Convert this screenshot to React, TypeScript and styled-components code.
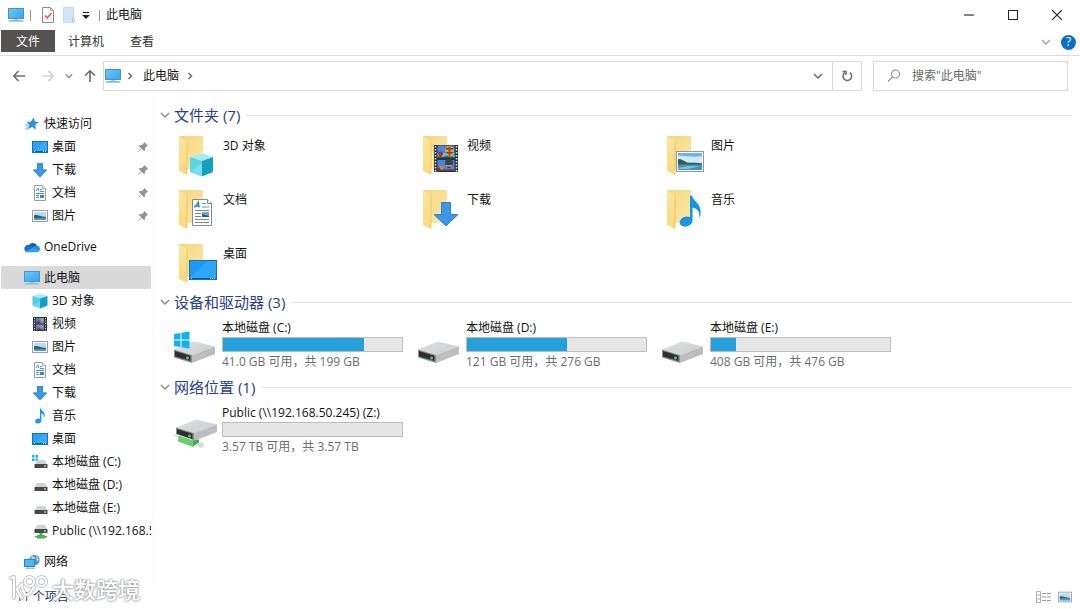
import React from "react";
import styled, { createGlobalStyle } from "styled-components";

const GlobalStyle = createGlobalStyle`
  * { box-sizing: border-box; }
  html, body, #root { height: 100%; }
  body {
    margin: 0;
    background: #fff;
    color: #111;
    font: 12px/16px "Open Sans", "Noto Sans CJK SC", sans-serif;
  }
  button, input { font: inherit; color: inherit; }
  ul { list-style: none; margin: 0; padding: 0; }
  a { color: inherit; text-decoration: none; }
  svg { display: block; flex: none; }
`;

/* ---------- icons ---------- */

type IconProps = { size?: number };

const PcIcon = () => (
  <svg width="16" height="16" viewBox="0 0 16 16">
    <defs>
      <linearGradient id="pc" x1="0" y1="0" x2="1" y2="1">
        <stop offset="0" stopColor="#6fc9fb" />
        <stop offset="0.5" stopColor="#4bb8fa" />
        <stop offset="1" stopColor="#36a5f0" />
      </linearGradient>
    </defs>
    <rect x="0.5" y="1.5" width="15" height="10" fill="url(#pc)" stroke="#4a93bd" />
    <rect x="6" y="12" width="4" height="1" fill="#a9c3d2" />
    <path d="M1 13h14l1 2H0z" fill="#b4cddb" />
    <path d="M2 13.5h12" stroke="#7fa6bd" strokeWidth="0.6" />
  </svg>
);

const StarIcon = () => (
  <svg width="16" height="16" viewBox="0 0 16 16">
    <path d="M9.800 1.500l1 4 4.200.5-3.600 2.500.4 5.300-3.600-3L3.800 13.500l1.600-4.600L2.500 6l4.200-.3z" fill="#2b93df" />
    <path d="M1 9h4M2 11h3M1 13h3" stroke="#6fb8ec" strokeWidth="1" />
  </svg>
);

const DesktopIcon = () => (
  <svg width="16" height="16" viewBox="0 0 16 16">
    <rect x="0.5" y="2.5" width="15" height="11" fill="#27a0f6" stroke="#1572b5" />
    <path d="M1 13L12 3h3v10z" fill="#43b1fb" opacity="0.6" />
    <path d="M1 12.5h14" stroke="#0f5f9d" />
    <path d="M2 12.5h1M11 12.5h3" stroke="#d9efff" strokeDasharray="1 1" />
  </svg>
);

const DownIcon = () => (
  <svg width="16" height="16" viewBox="0 0 16 16">
    <path d="M5 1h6v6.500h4.500L8 15.500.500 7.500H5z" fill="#3c96e4" />
    <path d="M5.500 1.500h5v6.500h3.800L8 14.800 1.700 8h3.800z" fill="none" stroke="#2f82cc" strokeWidth="0.7" />
  </svg>
);

const DocIcon = () => (
  <svg width="16" height="16" viewBox="0 0 16 16">
    <path d="M2.500.500h8l3 3v12h-11z" fill="#fff" stroke="#9a9fa3" />
    <path d="M10.500.500v3h3" fill="#e8e8e8" stroke="#9a9fa3" strokeWidth="0.8" />
    <path d="M4 6l2-3 1 3M8 4.500h2M8 6.500h4M4 8.500h8" stroke="#3e96d6" fill="none" />
    <path d="M4 10.500h3M4 12.500h3" stroke="#4a9ad5" />
    <rect x="8" y="10" width="4" height="3" fill="#3f86b8" />
  </svg>
);

const PicIcon = ({ size = 16 }: IconProps) => (
  <svg width={size} height={size} viewBox="0 0 16 16">
    <rect x="0.500" y="2.500" width="15" height="11" fill="#fff" stroke="#98a0a6" />
    <rect x="2" y="4" width="12" height="8" fill="#b5dcf5" />
    <path d="M2 7.500c3-1.500 5 1 12 1.500v1H2z" fill="#335f62" />
    <rect x="2" y="10" width="12" height="2" fill="#4b9bd2" />
  </svg>
);

const CloudIcon = () => (
  <svg width="16" height="16" viewBox="0 0 16 16">
    <path d="M4.800 6.200A4.700 4.700 0 0 1 13 6.600L8 10z" fill="#0c5cb1" />
    <path d="M.500 10.500a3.700 3.700 0 0 1 5.200-4.300L12 10l-8 3.200A3.200 3.200 0 0 1 .500 10.500z" fill="#1673cc" />
    <path d="M12.600 6.500A3.400 3.400 0 0 1 15.200 12L8.500 9.300c1-2 2.500-3 4.100-2.800z" fill="#2390df" />
    <path d="M1.500 12.200L8.500 8.800l7 2.700c-.4 1-1.300 1.700-2.700 1.700H4c-1 0-1.900-.4-2.500-1z" fill="#2a9fec" />
  </svg>
);

const CubeIcon = () => (
  <svg width="16" height="16" viewBox="0 0 16 16">
    <path d="M.500 3L8 .500 15.500 3 8 5.500z" fill="#a5e9f2" />
    <path d="M.500 3L8 5.500v10L.500 12.500z" fill="#4fd0e2" />
    <path d="M15.500 3L8 5.500v10l7.500-3z" fill="#12a0bf" />
    <path d="M.500 12.500L8 8v7.500z" fill="#8ae3ee" opacity="0.5" />
  </svg>
);

const FilmIcon = () => (
  <svg width="16" height="16" viewBox="0 0 16 16">
    <rect x="1" y="1" width="14" height="14" fill="#33353d" />
    <path d="M2.500 2v13M13.500 2v13" stroke="#e4e4e4" strokeDasharray="1 1.500" />
    <path d="M4 2h8v5.500H4zM4 8.500h8V14H4z" fill="#4f82dc" />
    <path d="M8 2.500h3.500v2L10 6.500z" fill="#e2a52c" />
    <path d="M4 6.500l3-2 1.500 3H4z" fill="#7c3140" />
    <path d="M7 9.500h4v2L9 13z" fill="#d38c2a" />
    <path d="M4 14l3-2 4 2z" fill="#7c3140" />
  </svg>
);

const MusicIcon = () => (
  <svg width="16" height="16" viewBox="0 0 16 16">
    <path d="M8 .500h1.200c.3 2.500 4.600 3.600 3.400 8.500h-.8c.2-2.200-.8-3.300-2.400-3.800V12.500c0 1.800-1.600 3-3.600 3S3 14.300 3.200 13c.2-1.600 2.600-2.900 4.800-2.200z" fill="#1b98e4" />
  </svg>
);

const SmallDrive = ({ kind }: { kind?: "system" | "network" }) => (
  <svg width="16" height="16" viewBox="0 0 16 16">
    {kind === "system" && (
      <path d="M0 1h2.500v2.500H0zM3.500 1H6v2.500H3.500zM0 4.500h2.500V7H0zM3.500 4.500H6V7H3.500z" fill="#12b1ec" />
    )}
    <g transform={kind === "network" ? "translate(1 -3)" : "translate(1 1)"}>
      <path d="M4 5h8l2 4H2z" fill="#d1d2d4" />
      <rect x="1.500" y="9" width="13" height="4" rx="0.500" fill="#46494c" />
      <rect x="11" y="10" width="2" height="2" fill="#5fd053" />
    </g>
    {kind === "network" && (
      <path d="M7.500 10h3v2h2.500v1h2v1.500h-2v1h-8v-1H3V13h2v-1h2.500z" fill="#4bb14d" />
    )}
  </svg>
);

const NetworkIcon = () => (
  <svg width="16" height="16" viewBox="0 0 16 16">
    <circle cx="10.500" cy="6" r="5.200" fill="#4f9bcb" />
    <path d="M7 3c2-2 3 0 4 1s-1 2-3 2zM12 2c2 1 2 3 3 4l-2 1z" fill="#b4dced" />
    <rect x="0.500" y="5.500" width="10" height="7" fill="#4db6f5" stroke="#347fb4" />
    <path d="M2 13.500h8l1 1.500H1z" fill="#9dbccd" />
  </svg>
);

const PinIcon = () => (
  <svg width="12" height="12" viewBox="0 0 12 12">
    <path d="M7.300 1l3.700 3.700-1 .5-2 2 .1 2.300-1.100.8-2.400-2.500L1.500 11 1 10.500l3.200-3.200L1.800 5l.9-1.100 2.200.1 2-2z" fill="#8c959c" />
  </svg>
);

const Chevron = ({ dir, color = "#6b6b6b", size = 10 }: { dir: "down" | "right"; color?: string; size?: number }) => (
  <svg width={size} height={size} viewBox="0 0 10 10" fill="none" stroke={color} strokeWidth="1.500">
    <path d={dir === "down" ? "M1 3l4 4 4-4" : "M3.500 2l3 3-3 3"} />
  </svg>
);

const Arrow = ({ turn, color }: { turn: number; color: string }) => (
  <svg width="14" height="14" viewBox="0 0 14 14" fill="none" stroke={color} strokeWidth="1.700">
    <path d="M13 7H2M6.500 2L1.800 7l4.700 5" transform={`rotate(${turn} 7 7)`} />
  </svg>
);

const PropertiesIcon = () => (
  <svg width="14" height="16" viewBox="0 0 14 16">
    <path d="M1.500.500h8l3 3v12h-11z" fill="#fafafa" stroke="#8c8c8c" />
    <path d="M9.500.500v3h3" fill="none" stroke="#a5a5a5" />
    <path d="M4 8.500l2.300 2.500L10.500 6" fill="none" stroke="#e56a3c" strokeWidth="1.700" />
  </svg>
);

const NewFolderIcon = () => (
  <svg width="14" height="16" viewBox="0 0 14 16">
    <path d="M1.500.500h10v10l1 1v4h-11z" fill="#d5e3f6" stroke="#c6d6ee" />
    <path d="M10.500 10.500v5" stroke="#b1c3de" />
  </svg>
);

type Badge = "cube" | "doc" | "desktop" | "video" | "down" | "picture" | "music";

const FolderBadge = ({ badge }: { badge: Badge }) => {
  switch (badge) {
    case "cube":
      return (
        <g>
          <path d="M12 21l12-3.500L35 21l-11 4z" fill="#a4ebf3" />
          <path d="M12 21l12 4v15.500L12 36z" fill="#5ed3e4" />
          <path d="M35 21l-11 4v15.500L35 36z" fill="#0fa3c0" />
          <path d="M12 36l12-9v13.500z" fill="#8fe5ef" opacity="0.6" />
        </g>
      );
    case "doc":
      return (
        <g>
          <path d="M14.500 9.500h15l4 4v22h-19z" fill="#fff" stroke="#85898c" />
          <path d="M29.500 9.500v4h4" fill="#ededed" stroke="#85898c" />
          <path d="M16.500 17.500l4-5.500.5 5.500M18 16h3" fill="none" stroke="#2e7fc0" strokeWidth="1.300" />
          <path d="M24 13.500h4M24 17h7" stroke="#4c9ad3" />
          <path d="M17 20.500h14M17 23.500h6M17 26.500h6M17 29.500h14M17 32.500h14" stroke="#7b8790" />
          <rect x="24" y="22" width="7" height="5" fill="#6fa7cc" />
          <path d="M24 27v-3l7 2v1z" fill="#315a70" />
        </g>
      );
    case "desktop":
      return (
        <g>
          <rect x="11.500" y="16.500" width="27" height="19" fill="#1e9cf4" stroke="#1670ae" />
          <path d="M12 34L30 17h8v17z" fill="#3aadfb" opacity="0.6" />
          <path d="M12 34.500h26" stroke="#0d5c97" />
          <path d="M13 34.500h2M32 34.500h6" stroke="#cdeaff" strokeDasharray="1 1" />
        </g>
      );
    case "video":
      return (
        <g>
          <rect x="12" y="9" width="24" height="27" fill="#2f3138" />
          <path d="M13.500 10v26M34.500 10v26" stroke="#e4e4e4" strokeWidth="1.500" strokeDasharray="1.500 1.500" />
          <path d="M15.500 9.500h17v12.500h-17zM15.500 24h17v11h-17z" fill="#4a84e0" />
          <path d="M15.500 17h17v5h-17z" fill="#79afe8" />
          <path d="M23 14.500a4.500 4.500 0 0 1 9 0c0 2-2 3.500-3.500 6h-2c-1-2.500-3.500-4-3.500-6z" fill="#e3a62b" />
          <path d="M24 12h7v1.500h-7zM24 16h7l-1 1.500h-5z" fill="#31573c" />
          <path d="M26.500 10.500h2v9h-2z" fill="#c23c2c" />
          <path d="M16 18a2.500 2.500 0 0 1 5 0l-2 3h-1z" fill="#a5323c" />
          <path d="M15.500 22v-2l5 1 4-1 8 1v1z" fill="#335d34" />
          <path d="M23 27a4 4 0 0 1 8 0c0 2-2 3-3 5h-2c-1-2-3-3-3-5z" fill="#35415c" />
          <path d="M24 29h6v1.500h-6z" fill="#d2a12e" />
          <path d="M15.500 35v-3l5-1 3 3 4-1 5 1v1z" fill="#7c3140" />
          <circle cx="20" cy="32" r="2" fill="#d38c2a" />
        </g>
      );
    case "down":
      return <path d="M19.500 12.500h9v12h7.500L24 36 12 24.500h7.500z" fill="#3a98e9" stroke="#2e82cc" />;
    case "picture":
      return (
        <g>
          <rect x="10.500" y="15.500" width="27" height="20" fill="#fff" stroke="#92999e" />
          <rect x="12" y="17" width="24" height="17" fill="#6fb0ee" />
          <path d="M12 20c6-1 12 2 24 0v7H12z" fill="#cfe9f8" />
          <path d="M12 23c4 0 6 2 9 3.500 5 .5 11 0 15 1V29H12z" fill="#31604f" />
          <path d="M12 28.500h24V34H12z" fill="#3f93c4" />
          <path d="M12 32l10-2 12 0-12 3H12z" fill="#7dbfda" />
        </g>
      );
    case "music":
      return (
        <path d="M24 5.500h2c1 6 10.500 8 8.500 19.500-.3 1.400-1 2.400-1.300 2.300 1-5-1.700-9-6.700-9.800V30c0 4-3.500 6.500-7.500 6.500S13 34 14 31c1.200-4 6-5.500 10-4z" fill="#1795e2" />
      );
  }
};

const FolderIcon = ({ badge }: { badge: Badge }) => (
  <svg width="40" height="44" viewBox="0 0 40 44">
    <defs>
      <linearGradient id="folder-back" x1="0" y1="0" x2="1" y2="1">
        <stop offset="0" stopColor="#f5d67e" />
        <stop offset="1" stopColor="#fde9a9" />
      </linearGradient>
      <linearGradient id="folder-front" x1="0" y1="0" x2="0" y2="1">
        <stop offset="0" stopColor="#fde6a0" />
        <stop offset="1" stopColor="#fbd979" />
      </linearGradient>
    </defs>
    <path d="M1 0h24v33H8z" fill="url(#folder-back)" />
    <path d="M1 0l8 6v33l-8-4z" fill="url(#folder-front)" />
    <path d="M9 6v32" stroke="#e2bd62" strokeWidth="0.700" />
    <FolderBadge badge={badge} />
  </svg>
);

const DriveIcon = ({ kind }: { kind: "plain" | "system" | "network" }) => (
  <svg width="46" height="40" viewBox="0 0 46 40">
    <defs>
      <linearGradient id="drive-top" x1="0" y1="0" x2="1" y2="1">
        <stop offset="0" stopColor="#dedfe0" />
        <stop offset="1" stopColor="#cdced0" />
      </linearGradient>
    </defs>
    <g transform={kind === "network" ? "translate(2 -7)" : undefined}>
      <path d="M2 21.500L22 13.500 43 18.500 20 27z" fill="url(#drive-top)" />
      <path d="M20 27l23-8.500v7.500L20 35z" fill="#bcbdc0" />
      <path d="M2 21.500L20 27v8L2 29.500z" fill="#8c8e91" />
      <path d="M3 23l15.500 4.700v5.400L3 28.500z" fill="#2c3033" />
      <circle cx="15.500" cy="30" r="1.500" fill="#41d344" />
    </g>
    {kind === "system" && (
      <path d="M2 6l6.500-1v6.500H2zM9.500 4.800L17.500 3.500v8h-8zM2 12.500h6.500V19L2 18zM9.500 12.500h8v8l-8-1.300z" fill="#0fb2ee" />
    )}
    {kind === "network" && (
      <g>
        <path d="M1 22.500l4-1.500 26 9.500-3 4z" fill="#dfe3e3" />
        <circle cx="29" cy="32" r="2.800" fill="#d8dbdb" />
        <path d="M7 23l13 4.500 7-1v3l-6 4L6 28z" fill="#3fb34b" />
        <path d="M7 23l14 5v6L6 28.500z" fill="#66d36d" />
      </g>
    )}
  </svg>
);

const RefreshIcon = () => (
  <svg width="14" height="14" viewBox="0 0 14 14" fill="none" stroke="#6a6a6a" strokeWidth="1.500">
    <path d="M9.800 3.600a4.300 4.300 0 1 1-5 0M2.500 2.500h3.500v3.500" />
  </svg>
);

const SearchIcon = () => (
  <svg width="14" height="14" viewBox="0 0 14 14" fill="none" stroke="#8b8b96" strokeWidth="1.100">
    <circle cx="8.500" cy="5" r="4" />
    <path d="M5.500 8L1 12.500" />
  </svg>
);

const LogoMark = () => (
  <svg width="42" height="28" viewBox="0 0 42 28" fill="none" strokeLinecap="round" strokeLinejoin="round">
    {["#c3c5c9", "#fff"].map((stroke, i) => (
      <g key={stroke} stroke={stroke} strokeWidth={i ? 2 : 4}>
        <path d="M3 3l3-1v21" />
        <path d="M14 9l-5 5c1 2 2 6 5 9" />
        <path d="M14 9c0 6 2 11 5 11 4 0 4-5 7-8" />
        <circle cx="21.500" cy="6.500" r="4.500" />
        <circle cx="33.500" cy="6.500" r="4.500" />
      </g>
    ))}
  </svg>
);

/* ---------- frame ---------- */

const Window = styled.div`
  position: relative;
  display: flex;
  flex-direction: column;
  min-height: 100%;
`;

const TitleBar = styled.header`
  display: flex;
  align-items: center;
  height: 30px;
  padding: 0 1px 0 8px;
`;

const QuickTools = styled.div`
  display: flex;
  align-items: center;
  gap: 6px;
  margin-right: auto;
`;

const ToolGroup = styled.div`
  display: flex;
  align-items: center;
`;

const Divider = styled.span`
  width: 1px;
  height: 11px;
  background: #999;
`;

const PlainButton = styled.button`
  display: flex;
  align-items: center;
  justify-content: center;
  padding: 0;
  border: 0;
  background: none;
`;

const ToolButton = styled(PlainButton)<{ $narrow?: boolean }>`
  width: ${(p) => (p.$narrow ? 14 : 21)}px;
  height: 22px;
`;

const WindowButton = styled(PlainButton)`
  width: 44px;
  height: 30px;
`;

const Title = styled.h1`
  margin: 0;
  font-size: 12px;
  font-weight: 400;
  line-height: 16px;
`;

const Ribbon = styled.div`
  display: flex;
  align-items: flex-start;
  height: 26px;
  padding-left: 1px;
  border-bottom: 1px solid #dcdcdc;
`;

const RibbonTab = styled.button<{ $file?: boolean }>`
  height: 22px;
  padding: 2px ${(p) => (p.$file ? 15 : 13)}px 0;
  border: 0;
  background: ${(p) => (p.$file ? "#545150" : "none")};
  color: ${(p) => (p.$file ? "#fff" : "#333")};
`;

const RibbonEnd = styled.div`
  display: flex;
  align-items: center;
  gap: 10px;
  height: 24px;
  margin-left: auto;
  padding-right: 4px;
`;

const Help = styled(PlainButton)`
  width: 15px;
  height: 15px;
  border-radius: 50%;
  background: #0a6fc8;
  color: #fff;
`;

const AddressRow = styled.div`
  display: flex;
  align-items: center;
  height: 40px;
  padding: 0 12px;
`;

const NavButtons = styled.div`
  display: flex;
  align-items: center;
  width: 91px;
  gap: 15px;
`;

const NavCluster = styled.div`
  display: flex;
  align-items: center;
  gap: 10px;
`;

const AddressBox = styled.div`
  display: flex;
  align-items: center;
  flex: 1;
  height: 30px;
  border: 1px solid #d9d9d9;
`;

const Crumbs = styled.nav`
  display: flex;
  align-items: center;
  gap: 4px;
  margin-right: auto;
  padding-left: 1px;

  a { padding: 0 2px 0 4px; }
`;

const BoxButton = styled(PlainButton)<{ $ruled?: boolean }>`
  width: 29px;
  height: 28px;
  border-left: ${(p) => (p.$ruled ? "1px solid #d9d9d9" : "0")};
`;

const SearchBox = styled.label`
  display: flex;
  align-items: center;
  width: 195px;
  height: 30px;
  margin-left: 11px;
  padding-left: 13px;
  gap: 11px;
  border: 1px solid #d9d9d9;

  input {
    flex: 1;
    min-width: 0;
    padding: 0;
    border: 0;
    outline: 0;
    background: none;
  }
  input::placeholder { color: #6a6a6a; opacity: 1; }
`;

/* ---------- sidebar ---------- */

const Body = styled.div`
  display: flex;
  flex: 1;
`;

const Sidebar = styled.nav`
  display: flex;
  flex-direction: column;
  gap: 8px;
  width: 154px;
  padding: 16px 2px 8px 1px;
  border-right: 1px solid #f5f5f5;
`;

const TreeLink = styled.a<{ $child?: boolean; $selected?: boolean }>`
  display: flex;
  align-items: center;
  gap: 4px;
  height: 23px;
  padding-left: ${(p) => (p.$child ? 31 : 23)}px;
  background: ${(p) => (p.$selected ? "#d9d9d9" : "none")};
  overflow: hidden;
  white-space: nowrap;
`;

const PinSlot = styled.span`
  margin-left: auto;
  padding-right: 2px;
`;

/* ---------- main area ---------- */

const Main = styled.main`
  flex: 1;
  min-width: 0;
  padding: 8px 8px 8px 6px;
`;

const GroupSection = styled.section<{ $spaced?: boolean }>`
  padding-bottom: ${(p) => (p.$spaced ? 3 : 0)}px;
`;

const GroupHead = styled.h2`
  display: flex;
  align-items: center;
  gap: 4px;
  height: 22px;
  margin: 0;
  color: #27408b;
  font-size: 15px;
  font-weight: 400;
  line-height: 20px;

  &::after {
    content: "";
    flex: 1;
    height: 1px;
    margin-left: 2px;
    background: #e2e2e2;
  }
`;

const Tiles = styled.ul`
  display: grid;
  grid-template-columns: repeat(auto-fill, 244px);
  padding-left: 12px;
`;

const FolderTile = styled.a`
  display: flex;
  height: 54px;
  gap: 5px;
  padding: 10px 0 0 6px;
`;

const TileName = styled.span`
  padding-top: 2px;
`;

const DriveTile = styled.a`
  display: flex;
  height: 63px;
  padding-top: 7px;
`;

const DriveArt = styled.span`
  width: 50px;
  padding-top: 8px;
`;

const DriveInfo = styled.span`
  display: flex;
  flex-direction: column;
  width: 181px;
  white-space: nowrap;
`;

const Meter = styled.span`
  height: 15px;
  margin: 1px 0 2px;
  border: 1px solid #bcbcbc;
  background: #e6e6e6;
`;

const MeterFill = styled.span`
  display: block;
  height: 100%;
  background: #26a0da;
`;

const Muted = styled.span`
  color: #6d6d6d;
`;

/* ---------- status bar ---------- */

const StatusBar = styled.footer`
  display: flex;
  align-items: center;
  justify-content: space-between;
  height: 24px;
  padding: 0 8px 0 16px;
  color: #1e395b;
`;

const ViewButtons = styled.div`
  display: flex;
  gap: 6px;
`;

const Watermark = styled.div`
  position: absolute;
  left: 8px;
  bottom: 6px;
  display: flex;
  align-items: center;
  gap: 2px;
  color: #fff;
  font-size: 22px;
  font-weight: 500;
  line-height: 28px;
  text-shadow: 0 0 2px #9b9ea4, 0 0 2px #9b9ea4, 0 0 3px #b5b8bd;
  pointer-events: none;
`;

/* ---------- data ---------- */

type Node = { label: string; icon: React.ReactNode; pinned?: boolean };
type Branch = { root: Node; selected?: boolean; children?: Node[] };

const tree: Branch[] = [
  {
    root: { label: "快速访问", icon: <StarIcon /> },
    children: [
      { label: "桌面", icon: <DesktopIcon />, pinned: true },
      { label: "下载", icon: <DownIcon />, pinned: true },
      { label: "文档", icon: <DocIcon />, pinned: true },
      { label: "图片", icon: <PicIcon />, pinned: true },
    ],
  },
  { root: { label: "OneDrive", icon: <CloudIcon /> } },
  {
    root: { label: "此电脑", icon: <PcIcon /> },
    selected: true,
    children: [
      { label: "3D 对象", icon: <CubeIcon /> },
      { label: "视频", icon: <FilmIcon /> },
      { label: "图片", icon: <PicIcon /> },
      { label: "文档", icon: <DocIcon /> },
      { label: "下载", icon: <DownIcon /> },
      { label: "音乐", icon: <MusicIcon /> },
      { label: "桌面", icon: <DesktopIcon /> },
      { label: "本地磁盘 (C:)", icon: <SmallDrive kind="system" /> },
      { label: "本地磁盘 (D:)", icon: <SmallDrive /> },
      { label: "本地磁盘 (E:)", icon: <SmallDrive /> },
      { label: "Public (\\\\192.168.50.245) (Z:)", icon: <SmallDrive kind="network" /> },
    ],
  },
  { root: { label: "网络", icon: <NetworkIcon /> } },
];

const folders: { label: string; badge: Badge }[] = [
  { label: "3D 对象", badge: "cube" },
  { label: "视频", badge: "video" },
  { label: "图片", badge: "picture" },
  { label: "文档", badge: "doc" },
  { label: "下载", badge: "down" },
  { label: "音乐", badge: "music" },
  { label: "桌面", badge: "desktop" },
];

type Drive = { label: string; space: string; used: number; kind: "plain" | "system" | "network" };

const drives: Drive[] = [
  { label: "本地磁盘 (C:)", space: "41.0 GB 可用，共 199 GB", used: 79, kind: "system" },
  { label: "本地磁盘 (D:)", space: "121 GB 可用，共 276 GB", used: 56, kind: "plain" },
  { label: "本地磁盘 (E:)", space: "408 GB 可用，共 476 GB", used: 14, kind: "plain" },
];

const shares: Drive[] = [
  { label: "Public (\\\\192.168.50.245) (Z:)", space: "3.57 TB 可用，共 3.57 TB", used: 0, kind: "network" },
];

/* ---------- composed parts ---------- */

const TreeItem = ({ node, child, selected }: { node: Node; child?: boolean; selected?: boolean }) => (
  <TreeLink href="#" $child={child} $selected={selected}>
    {node.icon}
    {node.label}
    {node.pinned && (
      <PinSlot>
        <PinIcon />
      </PinSlot>
    )}
  </TreeLink>
);

const Group = ({ title, spaced, children }: { title: string; spaced?: boolean; children: React.ReactNode }) => (
  <GroupSection $spaced={spaced}>
    <GroupHead>
      <Chevron dir="down" color="#8a8a8a" />
      {title}
    </GroupHead>
    <Tiles>{children}</Tiles>
  </GroupSection>
);

const DriveItem = ({ drive }: { drive: Drive }) => (
  <li>
    <DriveTile href="#">
      <DriveArt>
        <DriveIcon kind={drive.kind} />
      </DriveArt>
      <DriveInfo>
        {drive.label}
        <Meter role="meter" aria-label={drive.label} aria-valuemin={0} aria-valuemax={100} aria-valuenow={drive.used}>
          <MeterFill style={{ width: `${drive.used}%` }} />
        </Meter>
        <Muted>{drive.space}</Muted>
      </DriveInfo>
    </DriveTile>
  </li>
);

export default function App() {
  return (
    <Window>
      <GlobalStyle />
      <TitleBar>
        <QuickTools>
          <PcIcon />
          <Divider />
          <ToolGroup>
            <ToolButton aria-label="属性">
              <PropertiesIcon />
            </ToolButton>
            <ToolButton aria-label="新建文件夹">
              <NewFolderIcon />
            </ToolButton>
            <ToolButton $narrow aria-label="自定义快速访问工具栏">
              <svg width="8" height="8" viewBox="0 0 8 8" fill="#222">
                <path d="M1 1h6v1H1zM0 4h8L4 8z" />
              </svg>
            </ToolButton>
          </ToolGroup>
          <Divider />
          <Title>此电脑</Title>
        </QuickTools>
        <WindowButton aria-label="最小化">
          <svg width="10" height="10" viewBox="0 0 10 10">
            <path d="M0 5h10" stroke="#333" strokeWidth="1.200" />
          </svg>
        </WindowButton>
        <WindowButton aria-label="最大化">
          <svg width="10" height="10" viewBox="0 0 10 10">
            <rect x="0.500" y="0.500" width="9" height="9" fill="none" stroke="#222" />
          </svg>
        </WindowButton>
        <WindowButton aria-label="关闭">
          <svg width="10" height="10" viewBox="0 0 10 10">
            <path d="M0 0l10 10M10 0L0 10" stroke="#222" strokeWidth="1.200" />
          </svg>
        </WindowButton>
      </TitleBar>

      <Ribbon>
        <RibbonTab $file>文件</RibbonTab>
        <RibbonTab>计算机</RibbonTab>
        <RibbonTab>查看</RibbonTab>
        <RibbonEnd>
          <PlainButton aria-label="展开功能区">
            <Chevron dir="down" color="#a5a5a5" />
          </PlainButton>
          <Help>?</Help>
        </RibbonEnd>
      </Ribbon>

      <AddressRow>
        <NavButtons>
          <PlainButton aria-label="后退">
            <Arrow turn={0} color="#6e6e6e" />
          </PlainButton>
          <NavCluster>
            <PlainButton aria-label="前进">
              <Arrow turn={180} color="#d2d2d2" />
            </PlainButton>
            <PlainButton aria-label="最近位置">
              <Chevron dir="down" size={8} color="#777" />
            </PlainButton>
            <PlainButton aria-label="上移">
              <Arrow turn={90} color="#6e6e6e" />
            </PlainButton>
          </NavCluster>
        </NavButtons>
        <AddressBox>
          <Crumbs>
            <PcIcon />
            <Chevron dir="right" />
            <a href="#">此电脑</a>
            <Chevron dir="right" />
          </Crumbs>
          <BoxButton aria-label="以前的位置">
            <Chevron dir="down" />
          </BoxButton>
          <BoxButton $ruled aria-label="刷新">
            <RefreshIcon />
          </BoxButton>
        </AddressBox>
        <SearchBox>
          <SearchIcon />
          <input type="text" aria-label="搜索" placeholder={'搜索"此电脑"'} />
        </SearchBox>
      </AddressRow>

      <Body>
        <Sidebar>
          {tree.map((branch) => (
            <div key={branch.root.label}>
              <TreeItem node={branch.root} selected={branch.selected} />
              {branch.children?.map((node) => (
                <TreeItem key={node.label} node={node} child />
              ))}
            </div>
          ))}
        </Sidebar>
        <Main>
          <Group title="文件夹 (7)" spaced>
            {folders.map((f) => (
              <li key={f.label}>
                <FolderTile href="#">
                  <FolderIcon badge={f.badge} />
                  <TileName>{f.label}</TileName>
                </FolderTile>
              </li>
            ))}
          </Group>
          <Group title="设备和驱动器 (3)">
            {drives.map((d) => (
              <DriveItem key={d.label} drive={d} />
            ))}
          </Group>
          <Group title="网络位置 (1)">
            {shares.map((d) => (
              <DriveItem key={d.label} drive={d} />
            ))}
          </Group>
        </Main>
      </Body>

      <StatusBar>
        <span>11 个项目</span>
        <ViewButtons>
          <PlainButton aria-label="详细信息">
            <svg width="16" height="14" viewBox="0 0 16 14" fill="none" stroke="#9a9a9a">
              <path d="M.500 1.500h4v11h-4zM.500 5h4M.500 9h4" stroke="#b5adb0" />
              <path d="M6 3.500h4M11 3.500h4M6 7h4M11 7h4M6 10.500h4M11 10.500h4" />
            </svg>
          </PlainButton>
          <PlainButton aria-label="大图标">
            <PicIcon size={14} />
          </PlainButton>
        </ViewButtons>
      </StatusBar>

      <Watermark>
        <LogoMark />
        大数跨境
      </Watermark>
    </Window>
  );
}
